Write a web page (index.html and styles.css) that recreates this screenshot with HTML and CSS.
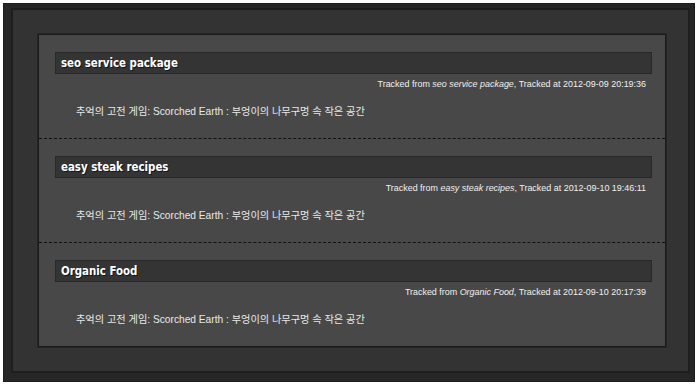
FILE: index.html
```html
<!DOCTYPE html>
<html lang="ko">
  <head>
    <meta charset="UTF-8" />
    <title>Tracked posts</title>
    <link rel="stylesheet" href="styles.css">
  </head>
  <body>
    <div class="frame">
      <div class="panel">
        <section class="posts">

          <article class="post">
            <h1 class="post-title">seo service package</h1>
            <p class="tracked">Tracked from <em>seo service package</em>, Tracked at 2012-09-09 20:19:36</p>
            <p class="excerpt">추억의 고전 게임: Scorched Earth : 부엉이의 나무구멍 속 작은 공간</p>
          </article>

          <article class="post">
            <h1 class="post-title">easy steak recipes</h1>
            <p class="tracked">Tracked from <em>easy steak recipes</em>, Tracked at 2012-09-10 19:46:11</p>
            <p class="excerpt">추억의 고전 게임: Scorched Earth : 부엉이의 나무구멍 속 작은 공간</p>
          </article>

          <article class="post">
            <h1 class="post-title">Organic Food</h1>
            <p class="tracked">Tracked from <em>Organic Food</em>, Tracked at 2012-09-10 20:17:39</p>
            <p class="excerpt">추억의 고전 게임: Scorched Earth : 부엉이의 나무구멍 속 작은 공간</p>
          </article>

        </section>
      </div>
    </div>
  </body>
</html>
```

FILE: styles.css
```css
body {
  margin: 0;
  background-color: #ffffff;
}

.frame {
  margin: 3px 5px 4px 3px;
  height: 379px;
  box-sizing: border-box;
  background-color: #262626;
  border: 1px solid #1c1c1c;
  padding: 4px 4px 8px 7px;
}

.panel {
  height: 100%;
  box-sizing: border-box;
  background-color: #333333;
  border: 2px solid #1e1e1e;
  padding: 24px 22px 0 25px;
}

.posts {
  background-color: #484848;
  border: 1px solid #1a1a1a;
  box-shadow: 0 0 0 1px #262626;
}

.post {
  height: 104px;
  box-sizing: border-box;
  padding: 17px 13px 0 16px;
  border-bottom: 1px dashed #111111;
}

.post:last-child {
  height: 103px;
  border-bottom: none;
}

.post-title {
  margin: 0;
  height: 22px;
  box-sizing: border-box;
  background-color: #343434;
  border: 1px solid #292929;
  padding: 0 5px;
  font-family: "DejaVu Sans Condensed", "DejaVu Sans", sans-serif;
  font-weight: bold;
  font-size: 11.4px;
  line-height: 20px;
  color: #ffffff;
  text-shadow: 1px 1px 0 #151515;
}

.tracked {
  margin: 4px 6px 0 0;
  text-align: right;
  font-family: "Liberation Sans", Arial, sans-serif;
  font-size: 8.95px;
  line-height: 12px;
  color: #f0f0f0;
}

.excerpt {
  margin: 15px 0 0 21px;
  font-family: "Liberation Sans", "Noto Sans CJK KR", sans-serif;
  font-size: 10.2px;
  line-height: 14px;
  color: #e8e8e8;
}
```
